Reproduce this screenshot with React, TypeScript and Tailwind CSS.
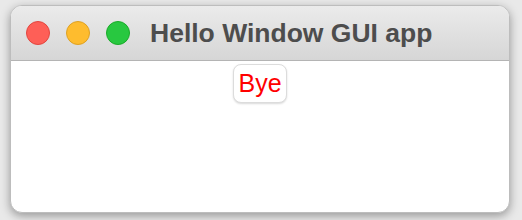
import React from 'react';

const lights = [
  { bg: 'bg-[#fe5f57]', border: 'border-[#e2463f]' },
  { bg: 'bg-[#febc2e]', border: 'border-[#dea123]' },
  { bg: 'bg-[#28c840]', border: 'border-[#1aab29]' },
];

export default function App() {
  return (
    <div className="w-[522px] h-[220px] bg-[#e9e9e9] pl-[10px] pt-[5px] overflow-hidden">
      <div className="w-[500px] h-[208px] rounded-[12px] bg-white border border-[#bdbdbd] shadow-[0_3px_10px_rgba(0,0,0,0.35)] overflow-hidden flex flex-col">
        {/* Title bar */}
        <div className="h-[55px] shrink-0 flex items-center pl-[15px] bg-gradient-to-b from-[#ebebeb] to-[#d6d6d6] border-b border-[#b4b4b4]">
          <div className="flex gap-[16px]">
            {lights.map((l, i) => (
              <div key={i} className={`w-[24px] h-[24px] rounded-full border ${l.bg} ${l.border}`} />
            ))}
          </div>
          <div
            className="ml-[20px] text-[26.5px] font-bold text-[#4d4d4d] leading-none"
            style={{ fontFamily: '"Liberation Sans", Arial, sans-serif' }}
          >
            Hello Window GUI app
          </div>
        </div>

        {/* Content */}
        <div className="flex-1 flex justify-center pt-[3px]">
          <button
            className="h-[39px] px-[4px] rounded-[8px] bg-white border border-[#dcdcdc] shadow-[0_1px_2px_rgba(0,0,0,0.15)] text-[25px] text-[#ff0000] leading-none"
            style={{ fontFamily: '"Liberation Sans", Arial, sans-serif' }}
          >
            Bye
          </button>
        </div>
      </div>
    </div>
  );
}
